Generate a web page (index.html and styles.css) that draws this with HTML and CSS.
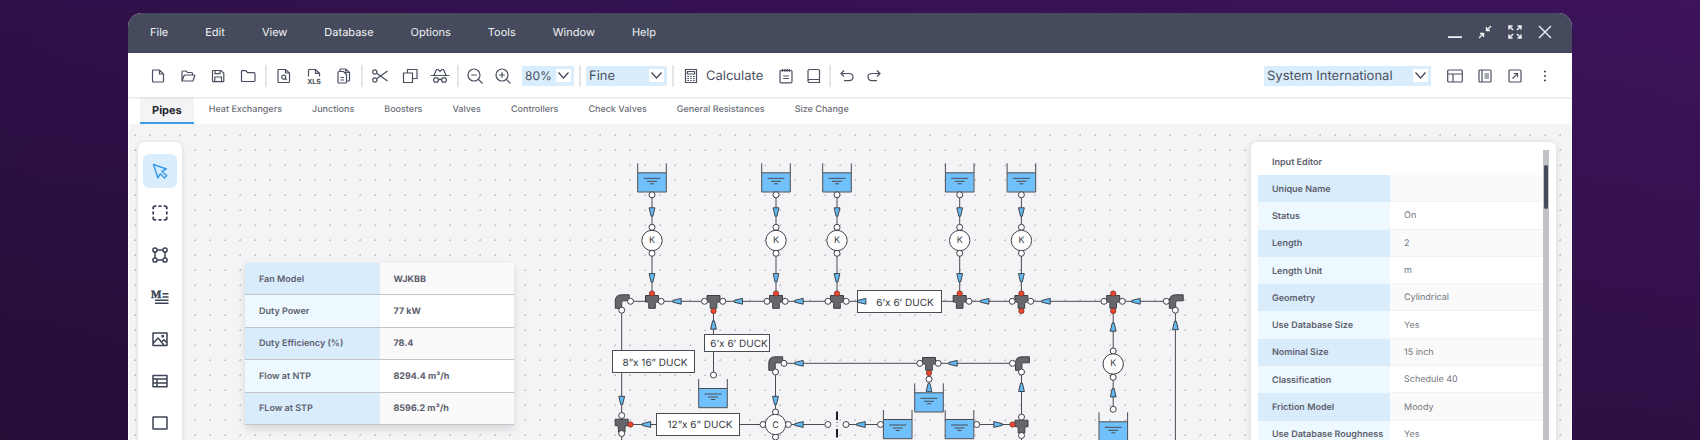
FILE: index.html
```html
<!DOCTYPE html>
<html lang="en">
<head>
<meta charset="utf-8">
<meta name="viewport" content="width=device-width, initial-scale=1">
<title>Pipe Network Editor</title>
<link rel="stylesheet" href="styles.css">
</head>
<body>
<main class="window">
  <header class="titlebar">
    <nav class="menu" aria-label="Main menu">
      <button type="button">File</button>
      <button type="button">Edit</button>
      <button type="button">View</button>
      <button type="button">Database</button>
      <button type="button">Options</button>
      <button type="button">Tools</button>
      <button type="button">Window</button>
      <button type="button">Help</button>
    </nav>
    <div class="controls">
      <button type="button" class="tool" aria-label="Minimize"><svg viewBox="0 0 16 16"><path d="M1 13.200H15" stroke-width="1.700"/></svg></button>
      <button type="button" class="tool" aria-label="Restore"><svg viewBox="0 0 16 16"><path d="M14 2 9.500 6.500M9.500 3V6.500H13M2 14 6.500 9.500M6.500 13V9.500H3" stroke-width="1.400"/></svg></button>
      <button type="button" class="tool" aria-label="Full screen"><svg viewBox="0 0 16 16"><path d="M2 5.500V2H5.500M2 2 6 6M10.500 2H14V5.500M14 2 10 6M2 10.500V14H5.500M2 14 6 10M14 10.500V14H10.500M14 14 10 10" stroke-width="1.500"/></svg></button>
      <button type="button" class="tool" aria-label="Close"><svg viewBox="0 0 16 16"><path d="M2 2 14 14M14 2 2 14" stroke-width="1.400"/></svg></button>
    </div>
  </header>

  <div class="toolbar">
    <button type="button" class="tool" aria-label="New"><svg viewBox="0 0 16 16"><path d="M3.500 2H9.500L13.500 6V13Q13.500 14 12.500 14H3.500Q2.500 14 2.500 13V3Q2.500 2 3.500 2ZM9.500 2V6H13.500"/></svg></button>
    <button type="button" class="tool" aria-label="Open"><svg viewBox="0 0 16 16"><path d="M2 13V4Q2 3 3 3H6L7.500 4.500H11.500Q12.500 4.500 12.500 5.500V7M2 13 4 7.800Q4.300 7 5 7H14Q15 7 14.700 7.800L13.200 12.200Q12.900 13 12 13Z"/></svg></button>
    <button type="button" class="tool" aria-label="Save"><svg viewBox="0 0 16 16"><path d="M3.300 2.500H11L13.800 5.200V13Q13.800 13.700 13 13.700H3.300Q2.500 13.700 2.500 13V3.300Q2.500 2.500 3.300 2.500ZM5 2.500V5.700H10V2.500M4.800 13.500V9H11.500V13.500"/></svg></button>
    <button type="button" class="tool" aria-label="Folder"><svg viewBox="0 0 16 16"><path d="M2 2.700H6L7.500 4.700H14Q15 4.700 15 5.700V12.500Q15 13.500 14 13.500H2.500Q1.500 13.500 1.500 12.500V3.200Q1.500 2.700 2 2.700Z"/></svg></button>
    <span class="divider"></span>
    <button type="button" class="tool" aria-label="Print preview"><svg viewBox="0 0 16 16"><path d="M3 1.500H9.500L13.500 5V13.500Q13.500 14.500 12.500 14.500H3Q2 14.500 2 13.500V2.500Q2 1.500 3 1.500ZM9.500 1.500V5H13.500M9.300 10.700 10.800 12.200"/><circle cx="7.700" cy="9.200" r="2"/></svg></button>
    <button type="button" class="tool" aria-label="Export XLS"><svg viewBox="0 0 16 16"><path d="M2.500 8.500V2.500Q2.500 1.500 3.500 1.500H9.500L13.500 5.300V8.500M9.500 1.500V5.300H13.500"/><text class="xls" x="8" y="15.500">XLS</text></svg></button>
    <button type="button" class="tool" aria-label="Copy pages"><svg viewBox="0 0 16 16"><path d="M3 3.500H7.500L10.500 6.500V14Q10.500 15 9.500 15H3Q2 15 2 14V4.500Q2 3.500 3 3.500ZM4.500 9.500H8M4.500 12H8M4 3.500V2Q4 1 5 1H9.800L13.500 4.500V12Q13.500 13 12.500 13H10.500M9.800 1V4.500H13.500"/></svg></button>
    <span class="divider"></span>
    <button type="button" class="tool" aria-label="Cut"><svg viewBox="0 0 16 16"><circle cx="2.800" cy="4" r="2.100"/><circle cx="2.800" cy="12" r="2.100"/><path d="M4.600 5.200 15.500 13M4.600 10.800 15.500 3"/></svg></button>
    <button type="button" class="tool" aria-label="Duplicate"><svg viewBox="0 0 16 16"><path d="M5.500 4.500V1.500H15V10.500H11M1.500 5H10.500V14.500H1.500Z"/></svg></button>
    <button type="button" class="tool wide-icon" aria-label="Inspect"><svg viewBox="0 0 20 16"><path d="M.7 7.500H19.300M4 7.300 6.500 1.500H8L10 3.500 12 1.500H13.500L16 7.300M8.300 12Q10 10.500 11.700 12"/><circle cx="6" cy="12" r="2.400"/><circle cx="14" cy="12" r="2.400"/></svg></button>
    <span class="divider"></span>
    <button type="button" class="tool zoom" aria-label="Zoom out"><svg viewBox="0 0 16 16"><circle cx="7" cy="7" r="6"/><path d="M11.500 11.500 15.500 15.500M4.200 7H9.800"/></svg></button>
    <button type="button" class="tool zoom" aria-label="Zoom in"><svg viewBox="0 0 16 16"><circle cx="7" cy="7" r="6"/><path d="M11.500 11.500 15.500 15.500M4.200 7H9.800M7 4.200V9.800"/></svg></button>
    <div class="picker picker-zoom">
      <select aria-label="Zoom level"><option>80%</option><option>100%</option></select>
      <span class="chevron"><svg viewBox="0 0 15 13"><path d="M2.500 3.500 7.500 9 12.500 3.500"/></svg></span>
    </div>
    <span class="divider"></span>
    <div class="picker picker-detail">
      <select aria-label="Detail"><option>Fine</option><option>Coarse</option></select>
      <span class="chevron"><svg viewBox="0 0 15 13"><path d="M2.500 3.500 7.500 9 12.500 3.500"/></svg></span>
    </div>
    <span class="divider"></span>
    <button type="button" class="calculate"><svg viewBox="0 0 14 16"><path d="M1.500 1.500H12.500V14.500H1.500ZM3.500 3.500H10.500V6H3.500Z"/><path d="M3.300 8.500H5M6.200 8.500H7.800M9 8.500H10.700M3.300 10.500H5M6.200 10.500H7.800M9 10.500H10.700M3.300 12.500H5M6.200 12.500H7.800M9 12.500H10.700" stroke-width="1.200"/></svg>Calculate</button>
    <button type="button" class="tool" aria-label="Notes"><svg viewBox="0 0 16 16"><path d="M3 2.500H13Q14 2.500 14 3.500V13.500Q14 14.800 12.700 14.800H3.300Q2 14.800 2 13.500V3.500Q2 2.500 3 2.500ZM5.200 8H10.800M5.200 10.500H10.800"/><path d="M4.500 1V3.800M6.900 1V3.800M9.200 1V3.800M11.500 1V3.800" stroke-width="1.400"/></svg></button>
    <button type="button" class="tool slim" aria-label="Library"><svg viewBox="0 0 16 16"><path d="M3.500 1.500H12.500Q13.500 1.500 13.500 2.500V11.500H3.500Q2 11.500 2 13V3Q2 1.500 3.500 1.500ZM2 13Q2 14.500 3.500 14.500H13.500V11.500"/></svg></button>
    <span class="divider"></span>
    <button type="button" class="tool undo" aria-label="Undo"><svg viewBox="0 0 16 16"><path d="M5 2.500 2 5.500 5 8.500M2.500 5.500H10Q14 5.500 14 9T10 12.700H5"/></svg></button>
    <button type="button" class="tool slim" aria-label="Redo"><svg viewBox="0 0 16 16"><path d="M11 2.500 14 5.500 11 8.500M13.500 5.500H6Q2 5.500 2 9T6 12.700H11"/></svg></button>

    <div class="toolbar-end">
      <div class="picker picker-units">
        <select aria-label="Unit system"><option>System International</option><option>Imperial</option></select>
        <span class="chevron"><svg viewBox="0 0 15 13"><path d="M2.500 3.500 7.500 9 12.500 3.500"/></svg></span>
      </div>
      <button type="button" class="tool" aria-label="Layout"><svg viewBox="0 0 16 16"><rect x=".7" y="2" width="14.600" height="12" rx="1"/><path d="M.7 6H15.300M6 6V14"/></svg></button>
      <button type="button" class="tool" aria-label="Details"><svg viewBox="0 0 16 16"><rect x="2" y="2" width="12" height="12" rx="1"/><path d="M5 2V14M7.500 6H12M7.500 8H12M7.500 10H12"/></svg></button>
      <button type="button" class="tool" aria-label="Open in new window"><svg viewBox="0 0 16 16"><rect x="2" y="2" width="12" height="12" rx="1"/><path d="M5.500 10.500 10.200 5.800M6.700 5.500H10.500V9.300"/></svg></button>
      <button type="button" class="tool more" aria-label="More"><svg viewBox="0 0 16 16"><circle cx="8" cy="3.500" r="1.100"/><circle cx="8" cy="8" r="1.100"/><circle cx="8" cy="12.500" r="1.100"/></svg></button>
    </div>
  </div>

  <nav class="tabs" aria-label="Components">
    <a href="#pipes" class="active" aria-current="page">Pipes</a>
    <a href="#heat-exchangers">Heat Exchangers</a>
    <a href="#junctions">Junctions</a>
    <a href="#boosters">Boosters</a>
    <a href="#valves">Valves</a>
    <a href="#controllers">Controllers</a>
    <a href="#check-valves">Check Valves</a>
    <a href="#general-resistances">General Resistances</a>
    <a href="#size-change">Size Change</a>
  </nav>

  <section class="canvas">
    <div class="palette">
      <button type="button" class="selected" aria-label="Select"><svg viewBox="0 0 16 16"><path d="M1.500 1.500 14.300 6 9.800 8.300 14.700 12.700 12.500 15 8.300 10.800 5.800 14.800Z"/></svg></button>
      <button type="button" aria-label="Marquee"><svg viewBox="0 0 16 16"><path d="M1.200 4.300V3Q1.200 1.200 3 1.200H4.300M6.500 1.200H9.500M11.700 1.200H13Q14.800 1.200 14.800 3V4.300M14.800 6.500V9.500M14.800 11.700V13Q14.800 14.800 13 14.800H11.700M9.500 14.800H6.500M4.300 14.800H3Q1.200 14.800 1.200 13V11.700M1.200 9.500V6.500" stroke-width="1.800"/></svg></button>
      <button type="button" aria-label="Group"><svg viewBox="0 0 16 16"><circle cx="3" cy="3" r="2.100"/><circle cx="13" cy="3" r="2.100"/><circle cx="3" cy="13" r="2.100"/><circle cx="13" cy="13" r="2.100"/><path d="M5 3H11M5 13H11M3 5V11M13 5V11"/></svg></button>
      <button type="button" class="text-tool" aria-label="Text"><svg viewBox="0 0 18 16"><text x="0" y="9">M</text><path d="M11.500 4.700H17.500M11.500 8H17.500M4 11.300H17.500M4 14.300H17.500" stroke-width="1.500"/></svg></button>
      <button type="button" aria-label="Image"><svg viewBox="0 0 16 16"><path d="M1 2H15V14.500H1ZM1 12.500 6 7 12 14M9.500 11 12 8.700 15 12"/><circle cx="10.700" cy="5.300" r=".7"/></svg></button>
      <button type="button" aria-label="Table"><svg viewBox="0 0 16 16"><path d="M1 2.500H15V13.800H1ZM1 6H15M1 10H15M5 6V13.800"/></svg></button>
      <button type="button" aria-label="Rectangle"><svg viewBox="0 0 16 16"><rect x="1" y="2" width="14" height="12" rx=".5"/></svg></button>
    </div>

    <table class="fan">
      <tbody>
        <tr><th scope="row">Fan Model</th><td>WJKBB</td></tr>
        <tr><th scope="row">Duty Power</th><td>77 kW</td></tr>
        <tr><th scope="row">Duty Efficiency (%)</th><td>78.4</td></tr>
        <tr><th scope="row">Flow at NTP</th><td>8294.4 m³/h</td></tr>
        <tr><th scope="row">FLow at STP</th><td>8596.2 m³/h</td></tr>
      </tbody>
    </table>

    <svg class="diagram" viewBox="610 142 580 330" role="img" aria-label="Pipe network">
      <defs>
        <g id="tank">
          <rect class="water" x="-14" y="9.500" width="28" height="19"/>
          <path class="pipe" d="M-14.300 0V28.700H14.300V0M-14.300 9.500H14.300M-8.500 15H8.500M-5 18H5M-2 20.500H2"/>
        </g>
        <path id="flow" class="arrow" d="M-2.900-4.200H2.900L.9 4.200H-.9Z"/>
        <circle id="node" class="node" r="3"/>
        <circle id="hot" class="hot" r="2.600"/>
        <path id="tee" class="fitting" d="M-6.500-5.800H6.500V.7H4.500L3.300 2V7H-3.300V2L-4.500.7H-6.500Z"/>
        <path id="elbow" class="fitting" d="M14.200 0V6H8.500Q6.700 6 6.700 8V13.500H.3V6Q.5 0 6.500 0Z"/>
        <g id="branch">
          <path class="pipe" d="M0 34V131"/>
          <use href="#tank"/>
          <use href="#node" y="31.500"/>
          <use href="#flow" y="48.700"/>
          <use href="#node" y="64"/>
          <circle class="node" cy="77.200" r="10.200"/>
          <use href="#node" y="90"/>
          <use href="#flow" y="114.500"/>
          <text class="mark" y="80">K</text>
        </g>
      </defs>

      <path class="pipe" d="M630 301.300H1166M621.700 313V472M713.500 311V372M775.500 375V410M784 363.300H1012M1021.500 372V415M1113.200 311V408M1175.400 313V472M630 424.500H763M788 424.500H825M849 424.500H878M979 424.500H1012M775.500 437V472M1021.500 437V472"/>

      <use href="#branch" x="652" y="163.300"/>
      <use href="#branch" x="776" y="163.300"/>
      <use href="#branch" x="837" y="163.300"/>
      <use href="#branch" x="959.700" y="163.300"/>
      <use href="#branch" x="1021.400" y="163.300"/>

      <rect class="tag" x="612.500" y="350.500" width="82" height="22"/>
      <rect class="tag" x="704.500" y="334.500" width="65" height="17"/>
      <rect class="tag" x="857.500" y="290.500" width="84" height="22"/>
      <rect class="tag" x="656.500" y="413.500" width="83" height="22"/>
      <text class="size" x="655" y="366">8”x 16” DUCK</text>
      <text class="size" x="739" y="347">6’x 6’ DUCK</text>
      <text class="size" x="905" y="305.500">6’x 6’ DUCK</text>
      <text class="size" x="700" y="428">12”x 6” DUCK</text>

      <g>
        <use href="#tee" x="652" y="301.300"/><use href="#tee" x="713.500" y="301.300"/><use href="#tee" x="776" y="301.300"/>
        <use href="#tee" x="837" y="301.300"/><use href="#tee" x="959.700" y="301.300"/><use href="#tee" x="1021.400" y="301.300"/>
        <use href="#tee" x="1113.200" y="301.300"/><use href="#tee" x="929" y="363.300"/>
        <use href="#tee" x="621.700" y="425"/><use href="#tee" x="1021.500" y="426"/>
        <use href="#elbow" x="615" y="294.800"/><use href="#elbow" x="768.500" y="356.800"/>
        <use href="#elbow" x="1015.200" y="356.800"/><use href="#elbow" x="1169" y="294.800"/>
      </g>

      <g>
        <use href="#node" x="630.500" y="301.300"/><use href="#node" x="621.700" y="310.200"/><use href="#node" x="661.200" y="301.300"/>
        <use href="#node" x="704.500" y="301.300"/><use href="#node" x="722.800" y="301.300"/><use href="#node" x="767" y="301.300"/>
        <use href="#node" x="785.200" y="301.300"/><use href="#node" x="828" y="301.300"/><use href="#node" x="846.200" y="301.300"/>
        <use href="#node" x="969" y="301.300"/><use href="#node" x="1012.200" y="301.300"/><use href="#node" x="1030.700" y="301.300"/>
        <use href="#node" x="1104" y="301.300"/><use href="#node" x="1122.300" y="301.300"/><use href="#node" x="1166.300" y="301.300"/>
        <use href="#node" x="1175.400" y="310.200"/><use href="#node" x="784" y="363.300"/><use href="#node" x="775.500" y="372"/>
        <use href="#node" x="919.800" y="363.300"/><use href="#node" x="938.200" y="363.300"/><use href="#node" x="1012.500" y="363.300"/>
        <use href="#node" x="1021.500" y="372"/><use href="#node" x="713.500" y="375"/><use href="#node" x="621.700" y="415.500"/>
        <use href="#node" x="621.700" y="433.500"/><use href="#node" x="763" y="424.500"/><use href="#node" x="788.300" y="424.500"/>
        <use href="#node" x="775.500" y="412"/><use href="#node" x="775.500" y="437"/><use href="#node" x="827.800" y="424.500"/>
        <use href="#node" x="846" y="424.500"/><use href="#node" x="880.500" y="424.500"/><use href="#node" x="976.700" y="424.500"/>
        <use href="#node" x="1021.500" y="417"/><use href="#node" x="1021.500" y="435.500"/><use href="#node" x="1113.200" y="351"/>
        <use href="#node" x="1113.200" y="377.300"/><use href="#node" x="1113.200" y="409.300"/><use href="#node" x="929" y="379.200"/>
      </g>
      <circle class="node" cx="775.500" cy="424.500" r="10.200"/>
      <circle class="node" cx="1113.200" cy="364" r="10.200"/>
      <text class="mark" x="775.500" y="427.500">C</text>
      <text class="mark" x="1113.200" y="365.500">K</text>

      <g>
        <use href="#hot" x="652" y="293.500"/><use href="#hot" x="776" y="293.500"/><use href="#hot" x="837" y="293.500"/>
        <use href="#hot" x="959.700" y="293.500"/><use href="#hot" x="1021.400" y="293.500"/><use href="#hot" x="1113.200" y="293.500"/>
        <use href="#hot" x="713.500" y="311"/><use href="#hot" x="1021.400" y="311"/><use href="#hot" x="1113.200" y="311"/>
        <use href="#hot" x="929" y="373"/><use href="#hot" x="630.500" y="424.500"/><use href="#hot" x="1012.500" y="424.500"/>
      </g>

      <g>
        <use href="#flow" transform="translate(677 301.300) rotate(90)"/>
        <use href="#flow" transform="translate(738.300 301.300) rotate(90)"/>
        <use href="#flow" transform="translate(799 301.300) rotate(90)"/>
        <use href="#flow" transform="translate(861.700 301.300) rotate(90)"/>
        <use href="#flow" transform="translate(984.700 301.300) rotate(90)"/>
        <use href="#flow" transform="translate(1046 301.300) rotate(90)"/>
        <use href="#flow" transform="translate(1136 301.300) rotate(90)"/>
        <use href="#flow" transform="translate(799 363.300) rotate(90)"/>
        <use href="#flow" transform="translate(953 363.300) rotate(90)"/>
        <use href="#flow" transform="translate(646.500 424.500) rotate(90)"/>
        <use href="#flow" transform="translate(799 424.500) rotate(90)"/>
        <use href="#flow" transform="translate(861 424.500) rotate(90)"/>
        <use href="#flow" transform="translate(998 424.500) rotate(-90)"/>
        <use href="#flow" x="621.700" y="400.500"/>
        <use href="#flow" x="775.500" y="400.500"/>
        <use href="#flow" transform="translate(713.500 325) rotate(180)"/>
        <use href="#flow" transform="translate(929 387.500) rotate(180)"/>
        <use href="#flow" transform="translate(1021.500 387.300) rotate(180)"/>
        <use href="#flow" transform="translate(1113.200 327) rotate(180)"/>
        <use href="#flow" transform="translate(1113.200 392.700) rotate(180)"/>
        <use href="#flow" transform="translate(1175.400 325.500) rotate(180)"/>
      </g>

      <path class="orifice" d="M837 411.500V420M837 429V437.500"/>
      <path class="pipe" d="M837 422V423M837 425.500V426.500"/>
      <use href="#tank" x="713" y="379"/>
      <use href="#tank" x="897.700" y="410"/>
      <use href="#tank" x="929" y="383.300"/>
      <use href="#tank" x="959.500" y="410"/>
      <use href="#tank" x="1113.300" y="412.300"/>
    </svg>

    <aside class="editor">
      <div class="editor-body">
        <h2>Input Editor</h2>
        <table>
          <tbody>
            <tr><th scope="row">Unique Name</th><td></td></tr>
            <tr><th scope="row">Status</th><td>On</td></tr>
            <tr><th scope="row">Length</th><td>2</td></tr>
            <tr><th scope="row">Length Unit</th><td>m</td></tr>
            <tr><th scope="row">Geometry</th><td>Cylindrical</td></tr>
            <tr><th scope="row">Use Database Size</th><td>Yes</td></tr>
            <tr><th scope="row">Nominal Size</th><td>15 inch</td></tr>
            <tr><th scope="row">Classification</th><td>Schedule 40</td></tr>
            <tr><th scope="row">Friction Model</th><td>Moody</td></tr>
            <tr><th scope="row">Use Database Roughness</th><td>Yes</td></tr>
          </tbody>
        </table>
      </div>
      <div class="scroll"><div class="thumb"></div></div>
    </aside>
  </section>
</main>
</body>
</html>
```
FILE: styles.css
```css
* {
  box-sizing: border-box;
}

body {
  margin: 0;
  height: 100vh;
  padding: 13px 128px 0;
  display: flex;
  overflow: hidden;
  font-family: Inter, "Open Sans", sans-serif;
  text-rendering: geometricPrecision;
  color: #4b5060;
  background:
    linear-gradient(to bottom, transparent, rgba(20, 8, 20, 0.34)),
    linear-gradient(to right, #2f1049, #3d135c);
}

button {
  margin: 0;
  padding: 0;
  border: 0;
  background: none;
  color: inherit;
  font: inherit;
  text-rendering: inherit;
}

svg {
  display: block;
  fill: none;
  stroke: currentColor;
  stroke-width: 1.2;
}

.window {
  flex: 1;
  min-width: 0;
  display: flex;
  flex-direction: column;
  overflow: hidden;
  border-radius: 14px 14px 0 0;
  background: #fff;
}

/* Title bar */
.titlebar {
  flex: none;
  height: 40px;
  padding: 0 12px 2px 22px;
  display: flex;
  align-items: center;
  justify-content: space-between;
  background: #454b5d;
  color: #f1f2f4;
}

.menu {
  display: flex;
  gap: 37px;
  font-size: 11px;
}

.controls {
  display: flex;
}

/* Toolbar */
.toolbar {
  flex: none;
  height: 44px;
  padding: 1px 12px 0 15px;
  display: flex;
  align-items: center;
  position: relative;
  box-shadow: 0 1px 2px rgba(0, 0, 0, 0.12);
}

.tool {
  width: 30px;
  height: 30px;
  display: grid;
  place-items: center;
}

.tool svg {
  width: 16px;
  height: 16px;
}

.wide-icon svg {
  width: 20px;
}

.zoom,
.undo {
  width: 28px;
}

.slim {
  width: 26px;
}

.more svg {
  fill: currentColor;
  stroke: none;
}

.xls {
  font-size: 7px;
  font-weight: 700;
  text-anchor: middle;
  fill: currentColor;
  stroke: none;
}

.divider {
  width: 2px;
  height: 22px;
  margin: 0 2px;
  background: #e6e6e9;
}

.picker {
  display: grid;
  align-items: center;
  margin: 0 3px;
  background: #d9edfd;
}

.picker select,
.picker .chevron {
  grid-area: 1 / 1;
}

.picker select {
  appearance: none;
  width: 100%;
  height: 20px;
  padding: 0 20px 0 3px;
  border: 0;
  border-radius: 0;
  background: none;
  font: 13px Inter, "Open Sans", sans-serif;
  text-rendering: inherit;
  color: #4b5060;
}

.picker .chevron {
  justify-self: end;
  margin-right: 3px;
  background: #fff;
  pointer-events: none;
}

.chevron svg {
  width: 15px;
  height: 13px;
  stroke-width: 1.4;
}

.picker-zoom {
  width: 52px;
  margin-left: 5px;
}

.picker-zoom select {
  font-size: 12px;
  padding-right: 17px;
}

.picker-detail {
  width: 81px;
}

.picker-units {
  width: 167px;
  margin-right: 9px;
}

.calculate {
  display: flex;
  align-items: center;
  gap: 8px;
  padding: 0 8px;
  font-size: 13px;
}

.calculate svg {
  width: 14px;
  height: 16px;
}

.toolbar-end {
  display: flex;
  align-items: center;
  margin-left: auto;
}

/* Component tabs */
.tabs {
  flex: none;
  height: 27px;
  padding-left: 12px;
  display: flex;
  font-size: 9px;
  font-weight: 500;
  line-height: 25px;
}

.tabs a {
  padding: 0 15px;
  color: #6c6f78;
  text-decoration: none;
}

.tabs .active {
  padding: 0 12px;
  border-bottom: 2px solid #3a9be9;
  background: #f4f4f6;
  color: #24262c;
  font-size: 11px;
  font-weight: 700;
  line-height: 26px;
}

/* Drawing canvas */
.canvas {
  flex: 1;
  min-height: 0;
  margin: 0 1px;
  padding: 18px 15px 0 9px;
  display: flex;
  align-items: flex-start;
  overflow: hidden;
  background: radial-gradient(circle, #c6c7cc 0, #c6c7cc 1px, transparent 1px) -1px 4px / 15px 15px #f4f4f6;
}

.palette {
  flex: none;
  width: 44px;
  padding: 12px 0;
  display: flex;
  flex-direction: column;
  align-items: center;
  gap: 8px;
  border-radius: 6px;
  background: #fff;
  box-shadow: 0 1px 4px rgba(0, 0, 0, 0.14);
  color: #3c4354;
}

.palette button {
  width: 34px;
  height: 34px;
  display: grid;
  place-items: center;
  border-radius: 6px;
}

.palette .selected {
  background: #d9edfd;
  color: #3a9be9;
}

.palette svg {
  width: 16px;
  height: 16px;
  stroke-width: 1.5;
  stroke-linejoin: round;
}

.palette .text-tool svg {
  width: 18px;
}

.text-tool text {
  font: 700 11px "Liberation Serif", serif;
  fill: currentColor;
  stroke-width: 0.4;
}

table {
  border-collapse: separate;
  border-spacing: 0;
  table-layout: fixed;
}

th,
td {
  padding: 1px 0 0;
  text-align: left;
  font-size: 9px;
}

th {
  font-weight: 600;
  background: #edf9ff;
}

tr:nth-child(odd) th {
  background: #d9ecfc;
}

tr:nth-child(odd) td {
  background: #fafafa;
}

.fan {
  flex: none;
  width: 269px;
  height: 162px;
  margin: 121px 0 0 63px;
  background: #fff;
  box-shadow: 0 4px 8px rgba(0, 0, 0, 0.12);
  color: #5c606d;
}

.fan th,
.fan td {
  width: 50%;
  padding-left: 14px;
  border-bottom: 1px solid #c3c4c9;
  font-weight: 600;
}

.fan td {
  font-weight: 700;
}

/* Pipe network */
.diagram {
  flex: none;
  width: 580px;
  height: 330px;
  margin-left: 96px;
  stroke-width: 1;
}

.pipe {
  stroke: #4a4c52;
}

.water {
  fill: #70c1fb;
  stroke: none;
}

.arrow {
  fill: #62baf3;
  stroke: #3f434b;
}

.node {
  fill: #fff;
  stroke: #3f4248;
}

.hot {
  fill: #f0452b;
  stroke: #8a3a30;
}

.fitting {
  fill: #65676c;
  stroke: #3c3e43;
}

.orifice {
  stroke: #1d1e22;
  stroke-width: 2;
}

.tag {
  fill: #fff;
  stroke: #4a4c52;
}

.mark,
.size {
  fill: #33363d;
  stroke: none;
  text-anchor: middle;
}

.mark {
  font-size: 9px;
}

.size {
  font-size: 10px;
}

/* Property editor */
.editor {
  flex: none;
  width: 305px;
  margin-left: auto;
  padding: 8px 7px 0;
  display: flex;
  gap: 1px;
  border-radius: 6px;
  background: #fff;
  box-shadow: 0 1px 6px rgba(0, 0, 0, 0.14);
}

.editor-body {
  flex: 1;
}

.editor h2 {
  margin: 0;
  padding-left: 14px;
  font-size: 9px;
  font-weight: 600;
  line-height: 25px;
  color: #5c606d;
}

.editor table {
  width: 100%;
  height: 273px;
}

.editor tr {
  height: 27px;
}

.editor th {
  width: 132px;
  padding-left: 14px;
  color: #5c606d;
}

.editor td {
  padding-left: 14px;
  color: #74777f;
  border-bottom: 1px solid #f1f1f3;
}

.scroll {
  width: 6px;
  padding: 15px 1px 0;
  background: #c1c2c6;
}

.thumb {
  height: 44px;
  border-radius: 2px;
  background: #454b5d;
}
```
